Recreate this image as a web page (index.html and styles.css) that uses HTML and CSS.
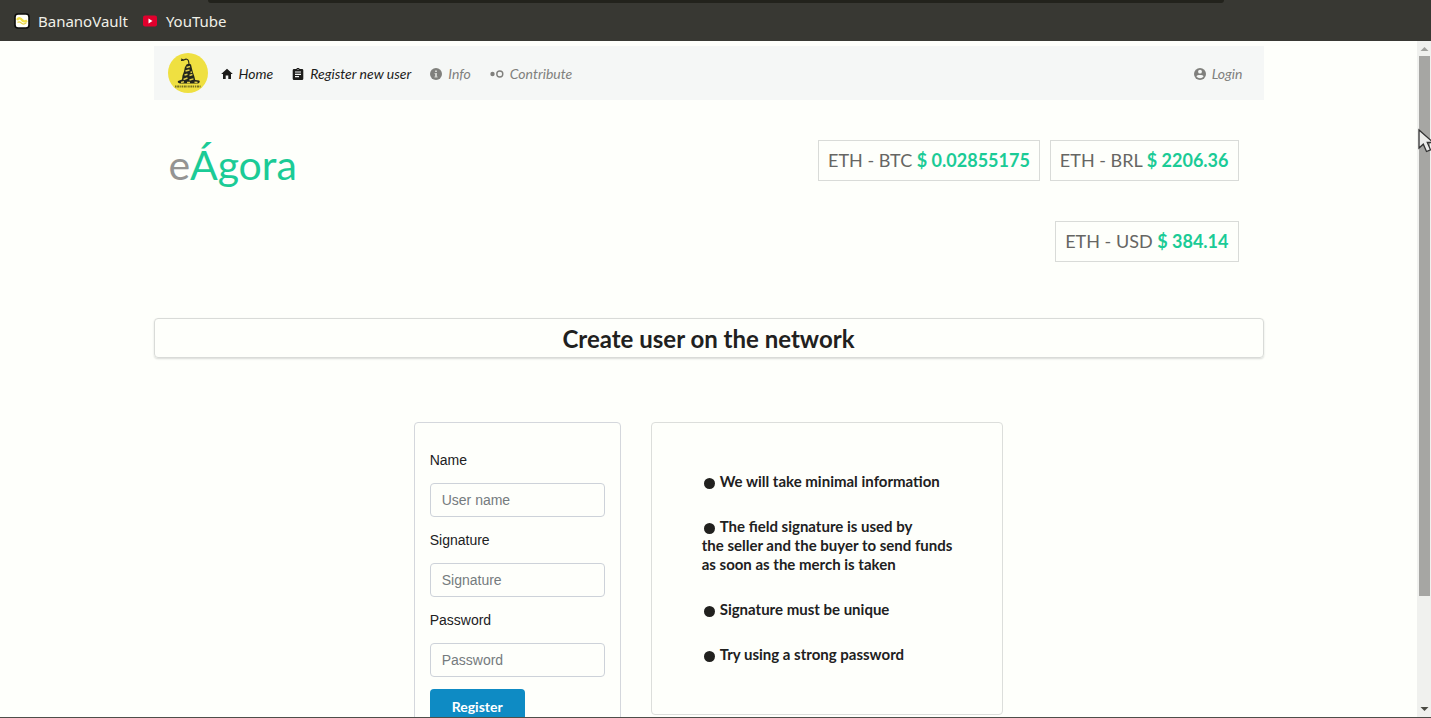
FILE: index.html
```html
<!DOCTYPE html>
<html lang="en">
<head>
<meta charset="utf-8">
<title>eÁgora</title>
<link rel="stylesheet" href="styles.css">
</head>
<body>
<div class="browser-bar">
  <div class="tab-edge"></div>
  <nav class="bookmarks" aria-label="Bookmarks">
    <a class="bookmark" href="#">
      <svg width="16" height="16" viewBox="0 0 16 16"><rect x="1" y="1" width="14" height="14" rx="3" fill="#fffffa" stroke="#0c0c0c" stroke-width="1.6"/><path d="M3 7c2-3 4-1.500 5 0s3 2 5 .5" fill="none" stroke="#f0df4a" stroke-width="2.400"/><path d="M3.500 9.500c2-2 3 0 4.500 1s3 .5 4.500-1" fill="none" stroke="#e8d44a" stroke-width="1.200"/></svg>
      <span>BananoVault</span>
    </a>
    <a class="bookmark" href="#">
      <svg width="16" height="16" viewBox="0 0 16 16"><rect x="1" y="2.500" width="14" height="11" rx="2" fill="#e1002d"/><path d="M6.500 5.500v5l4-2.500z" fill="#fff"/></svg>
      <span>YouTube</span>
    </a>
  </nav>
</div>
<div class="viewport">
  <main class="page">
    <div class="container">
      <header class="navbar">
        <a class="brand" href="#" aria-label="eÁgora home">
          <svg width="42" height="42" viewBox="0 0 42 42"><circle cx="21" cy="21" r="20" fill="#efe041"/><path d="M14 7l3 1M14 8.500l3-.2M17 8c2-1.500 4-1 4.500 1s.5 2 .5 4" fill="none" stroke="#29291a" stroke-width="1.100"/><path d="M19.500 12.500q2.500-1.500 4.500 0l.8 3.500 1 4 1.400 4 1 4 4 .5q1.500 1.500-1 3H13q-3-1-2-2.500l4-1.500.5-4 1.500-4 .8-4z" fill="#22261b"/><path d="M19.500 15.500l3.500-1M18.500 19l4-1M23.500 20.500l1.500-.5M17.500 23l3-.8M22.500 23.500l3-1M16.500 27.500l4-1.500M22.500 28l4-1.200M14 30.500l3-.8M20 30.500h3M27.500 30.300l3 .2" stroke="#dcc94a" stroke-width="1.400"/><path d="M8 34.500h26" stroke="#77721f" stroke-width="2" stroke-dasharray="1.500 .7 2 .6 1 .8"/></svg>
        </a>
        <nav class="menu" aria-label="Main">
          <a class="menu-item menu-item-active" href="#">
            <svg width="12" height="12" viewBox="0 0 12 12"><path d="M6 .8L11.800 6H10v5H7.300V7.500H4.700V11H2V6H.2z" fill="currentColor"/></svg>
            <span>Home</span>
          </a>
          <a class="menu-item menu-item-active" href="#">
            <svg width="12" height="12" viewBox="0 0 12 12"><path fill-rule="evenodd" d="M4.300 1a1.800 1.800 0 0 1 3.400 0H10q1.300 0 1.300 1.300v8.400Q11.300 12 10 12H2Q.7 12 .7 10.700V2.300Q.7 1 2 1zM3 3.500v1.100h6V3.500zM3 5.800v1.100h6V5.800zM3 8.100v1.100h4V8.100zM5.500 1.200v.8h1v-.8z" fill="currentColor"/></svg>
            <span>Register new user</span>
          </a>
          <a class="menu-item" href="#">
            <svg width="12" height="12" viewBox="0 0 12 12"><circle cx="6" cy="6" r="6" fill="currentColor"/><path d="M5 2.500h2v1.500H5zM4.600 5H7v3.500h.6v1H4.400v-1H5V6h-.4z" fill="#cfd1cd"/></svg>
            <span>Info</span>
          </a>
          <a class="menu-item" href="#">
            <svg width="14" height="12" viewBox="0 0 14 12"><circle cx="2.500" cy="6" r="2.200" fill="currentColor"/><circle cx="9.800" cy="6" r="3" fill="none" stroke="currentColor" stroke-width="1.400"/></svg>
            <span>Contribute</span>
          </a>
        </nav>
        <a class="menu-item" href="#">
          <svg width="12" height="12" viewBox="0 0 12 12"><circle cx="6" cy="6" r="6" fill="currentColor"/><circle cx="6" cy="3.700" r="1.900" fill="#f5f7f6"/><path d="M2.400 8.300C3 6.700 9 6.700 9.600 8.300 8.200 10.800 3.800 10.800 2.400 8.300z" fill="#f5f7f6"/></svg>
          <span>Login</span>
        </a>
      </header>

      <section class="hero">
        <h1 class="site-name">e<span class="accent">Ágora</span></h1>
        <div class="rates">
          <div class="rate">ETH - BTC <strong class="accent">$ 0.02855175</strong></div>
          <div class="rate">ETH - BRL <strong class="accent">$ 2206.36</strong></div>
          <div class="rate">ETH - USD <strong class="accent">$ 384.14</strong></div>
        </div>
      </section>

      <h2 class="title">Create user on the network</h2>

      <section class="columns">
        <form class="card signup">
          <label class="field-label" for="name">Name</label>
          <input class="field" id="name" type="text" placeholder="User name">
          <label class="field-label" for="signature">Signature</label>
          <input class="field" id="signature" type="text" placeholder="Signature">
          <label class="field-label" for="password">Password</label>
          <input class="field" id="password" type="password" placeholder="Password">
          <button class="submit" type="button">Register</button>
        </form>
        <ul class="card notes">
          <li class="note">We will take minimal information</li>
          <li class="note">The field signature is used by<br>the seller and the buyer to send funds<br>as soon as the merch is taken</li>
          <li class="note">Signature must be unique</li>
          <li class="note">Try using a strong password</li>
        </ul>
      </section>
    </div>
  </main>
  <div class="scrollbar" aria-hidden="true">
    <svg class="scroll-arrow" width="14" height="14" viewBox="0 0 14 14"><path d="M3.500 10L7.500 6l4 4z" fill="#a0a19d"/></svg>
    <div class="scroll-track"><div class="scroll-thumb"></div></div>
    <svg class="scroll-arrow" width="14" height="14" viewBox="0 0 14 14"><path d="M3.500 4l4 4 4-4z" fill="#4a4a43"/></svg>
  </div>
</div>
<svg class="pointer" width="20" height="28" viewBox="0 0 20 28" aria-hidden="true"><path d="M1 2v18l4.300-3.800 3.200 7.300 4-1.700-3.200-7.300h6z" fill="#ececea" stroke="#333" stroke-width="1.300"/></svg>
</body>
</html>
```
FILE: styles.css
```css
* {
  box-sizing: border-box;
}

body {
  display: flex;
  flex-direction: column;
  height: 100vh;
  margin: 0;
  overflow: hidden;
  border-bottom: 1px solid #4e4e49;
  background: #fefffb;
  color: #21211e;
  font-family: Lato, sans-serif;
  font-size: 14px;
}

a {
  color: inherit;
  text-decoration: none;
}

.accent {
  color: #1bcb96;
}

/* Browser chrome */
.browser-bar {
  flex: none;
  background: #383833;
}

.tab-edge {
  height: 3px;
  margin: 0 207px 0 208px;
  border-radius: 0 0 3px 3px;
  background: #22221c;
}

.bookmarks {
  display: flex;
  gap: 14px;
  height: 38px;
  padding: 0 0 2px 14px;
}

.bookmark {
  display: flex;
  align-items: center;
  gap: 8px;
  color: #f0f0e8;
  font-family: "Noto Sans", sans-serif;
  font-size: 15px;
}

.viewport {
  display: flex;
  flex: 1;
  min-height: 0;
}

.page {
  flex: 1;
  min-width: 0;
  overflow: hidden;
  padding: 5px 16px 0;
}

.container {
  max-width: 1110px;
  margin: 0 auto;
}

/* Navigation */
.navbar {
  display: flex;
  align-items: center;
  padding: 6px 21px 6px 13px;
  background: #f5f7f6;
}

.brand {
  height: 42px;
}

.menu {
  display: flex;
  flex: 1;
  gap: 19px;
  margin-left: 12px;
}

.menu-item {
  display: flex;
  align-items: center;
  gap: 6px;
  padding-top: 2px;
  color: #80807d;
  font-style: italic;
  line-height: 20px;
}

.menu-item-active {
  color: #1c1c1a;
}

/* Site name and exchange rates */
.hero {
  display: flex;
  justify-content: space-between;
  padding: 40px 25px 0 15px;
}

.site-name {
  margin: 0;
  color: #949492;
  font-size: 41px;
  font-weight: 400;
  line-height: 50px;
}

.rates {
  display: flex;
  flex-wrap: wrap;
  justify-content: flex-end;
  gap: 40px 10px;
  width: 50%;
}

.rate {
  padding: 0 9px;
  border: 1px solid #d9dbd8;
  color: #666663;
  font-size: 18px;
  line-height: 39px;
}

.title {
  margin: 56px 0 64px;
  padding-top: 1px;
  border: 1px solid #d9dbd8;
  border-radius: 4px;
  box-shadow: 0 1px 2px #d9dbd8;
  font-size: 24px;
  font-weight: 700;
  line-height: 37px;
  text-align: center;
}

/* Sign-up form and notes */
.columns {
  display: flex;
  justify-content: center;
  align-items: flex-start;
  gap: 30px;
}

.card {
  margin: 0;
  border: 1px solid #dcdedb;
  border-radius: 4px;
}

.signup {
  display: flex;
  flex-direction: column;
  align-items: flex-start;
  gap: 12px;
  padding: 26px 15px;
  border-color: #d4d7dc;
}

.field-label {
  font-family: "Liberation Sans", sans-serif;
  line-height: 22px;
}

.field {
  width: 175px;
  height: 34px;
  padding: 0 11px;
  border: 1px solid #cdd2d9;
  border-radius: 4px;
  background: transparent;
  font-family: "Liberation Sans", sans-serif;
  font-size: 14px;
}

.field::placeholder {
  color: #757b7e;
}

.submit {
  padding: 0 22px;
  border: 0;
  border-radius: 4px;
  background: #0e8bc4;
  color: #fff;
  font-family: Lato, sans-serif;
  font-size: 14px;
  font-weight: 700;
  line-height: 36px;
}

.notes {
  display: flex;
  flex-direction: column;
  gap: 26px;
  padding: 49px 50px 50px;
  list-style: none;
  font-size: 15px;
  font-weight: 700;
  line-height: 19px;
}

.note::before {
  display: inline-block;
  width: 11px;
  height: 11px;
  margin: 0 5px 0 2px;
  border-radius: 50%;
  background: #21211e;
  content: "";
  vertical-align: -2px;
}

/* Scrollbar and pointer */
.scrollbar {
  display: flex;
  flex: none;
  flex-direction: column;
  width: 14px;
  background: #f0f1ee;
}

.scroll-arrow {
  flex: none;
}

.scroll-track {
  flex: 1;
  padding: 1px 1px 0 2px;
}

.scroll-thumb {
  height: 83.5%;
  background: #a6a6a3;
}

.pointer {
  position: absolute;
  top: 128px;
  right: -7px;
}
```
